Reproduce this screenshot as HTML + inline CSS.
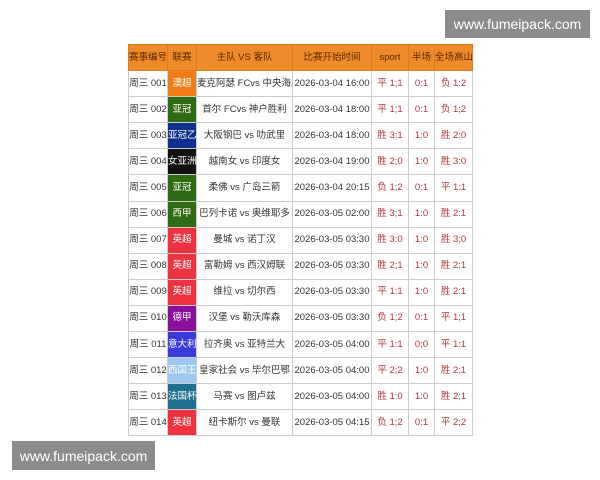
<!DOCTYPE html>
<html><head><meta charset="utf-8"><style>
*{margin:0;padding:0;box-sizing:border-box}
body{width:600px;height:480px;background:#fff;position:relative;overflow:hidden;font-family:"Liberation Sans","Noto Sans CJK SC",sans-serif;}
.wm{position:absolute;background:#8c8c8c;color:#fff;font-size:14px;display:flex;align-items:center;justify-content:center}
table{position:absolute;left:128px;top:44px;width:344px;table-layout:fixed;border-collapse:collapse;font-size:9.5px;color:#333}
td,th{border:1px solid #ccc;height:26.1px;text-align:center;padding:0;white-space:nowrap;overflow:hidden;line-height:12px;vertical-align:middle}
th{background:#ef8a2a;color:#5a2a00;font-weight:normal;border-color:#e07a20}
td.r{color:#b0343c}
td.l{color:#fff}
</style></head><body>
<div class="wm" style="left:445px;top:10px;width:145px;height:28px">www.fumeipack.com</div>
<div class="wm" style="left:12px;top:441px;width:143px;height:29px">www.fumeipack.com</div>
<table>
<colgroup><col style="width:39px"><col style="width:29px"><col style="width:96px"><col style="width:79px"><col style="width:37px"><col style="width:26px"><col style="width:38px"></colgroup>
<tr><th>赛事编号</th><th>联赛</th><th>主队 VS 客队</th><th>比赛开始时间</th><th>sport</th><th>半场</th><th>全场高山</th></tr>
<tr><td>周三 001</td><td class="l" style="background:#f07d1a">澳超</td><td>麦克阿瑟 FCvs 中央海岸</td><td>2026-03-04 16:00</td><td class="r">平 1;1</td><td class="r">0:1</td><td class="r">负 1:2</td></tr>
<tr><td>周三 002</td><td class="l" style="background:#2f6b12">亚冠</td><td>首尔 FCvs 神户胜利</td><td>2026-03-04 18:00</td><td class="r">平 1;1</td><td class="r">0:1</td><td class="r">负 1;2</td></tr>
<tr><td>周三 003</td><td class="l" style="background:#10308f">亚冠乙</td><td>大阪钢巴 vs 叻武里</td><td>2026-03-04 18:00</td><td class="r">胜 3:1</td><td class="r">1:0</td><td class="r">胜 2:0</td></tr>
<tr><td>周三 004</td><td class="l" style="background:#111">女亚洲</td><td>越南女 vs 印度女</td><td>2026-03-04 19:00</td><td class="r">胜 2;0</td><td class="r">1:0</td><td class="r">胜 3:0</td></tr>
<tr><td>周三 005</td><td class="l" style="background:#2f6b12">亚冠</td><td>柔佛 vs 广岛三箭</td><td>2026-03-04 20:15</td><td class="r">负 1;2</td><td class="r">0:1</td><td class="r">平 1:1</td></tr>
<tr><td>周三 006</td><td class="l" style="background:#2f6b12">西甲</td><td>巴列卡诺 vs 奥维耶多</td><td>2026-03-05 02:00</td><td class="r">胜 3;1</td><td class="r">1:0</td><td class="r">胜 2:1</td></tr>
<tr><td>周三 007</td><td class="l" style="background:#ee3340">英超</td><td>曼城 vs 诺丁汉</td><td>2026-03-05 03:30</td><td class="r">胜 3:0</td><td class="r">1:0</td><td class="r">胜 3;0</td></tr>
<tr><td>周三 008</td><td class="l" style="background:#ee3340">英超</td><td>富勒姆 vs 西汉姆联</td><td>2026-03-05 03:30</td><td class="r">胜 2;1</td><td class="r">1:0</td><td class="r">胜 2:1</td></tr>
<tr><td>周三 009</td><td class="l" style="background:#ee3340">英超</td><td>维拉 vs 切尔西</td><td>2026-03-05 03:30</td><td class="r">平 1:1</td><td class="r">1:0</td><td class="r">胜 2:1</td></tr>
<tr><td>周三 010</td><td class="l" style="background:#8a0f9c">德甲</td><td>汉堡 vs 勒沃库森</td><td>2026-03-05 03:30</td><td class="r">负 1;2</td><td class="r">0:1</td><td class="r">平 1;1</td></tr>
<tr><td>周三 011</td><td class="l" style="background:#3a3ad8">意大利</td><td>拉齐奥 vs 亚特兰大</td><td>2026-03-05 04:00</td><td class="r">平 1:1</td><td class="r">0;0</td><td class="r">平 1:1</td></tr>
<tr><td>周三 012</td><td class="l" style="background:#9cc8f0">西国王</td><td>皇家社会 vs 毕尔巴鄂</td><td>2026-03-05 04:00</td><td class="r">平 2;2</td><td class="r">1:0</td><td class="r">胜 2;1</td></tr>
<tr><td>周三 013</td><td class="l" style="background:#1f6f8f">法国杯</td><td>马赛 vs 图卢兹</td><td>2026-03-05 04:00</td><td class="r">胜 1:0</td><td class="r">1:0</td><td class="r">胜 2;1</td></tr>
<tr><td>周三 014</td><td class="l" style="background:#ee3340">英超</td><td>纽卡斯尔 vs 曼联</td><td>2026-03-05 04:15</td><td class="r">负 1;2</td><td class="r">0:1</td><td class="r">平 2;2</td></tr>
</table>
</body></html>
